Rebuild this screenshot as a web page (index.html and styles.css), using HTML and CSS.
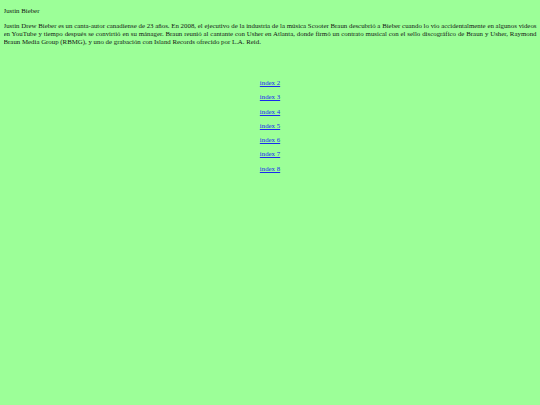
FILE: index.html
```html
<!DOCTYPE html>
<html lang="es">
<head>
<meta charset="utf-8">
<title>Justin Bieber</title>
<link rel="stylesheet" href="styles.css">
</head>
<body>
<p class="title">Justin Bieber</p>
<p class="bio">Justin Drew Bieber es un canta-autor canadiense de 23 años. En 2008, el ejecutivo de la industria de la música Scooter Braun descubrió a Bieber cuando lo vio accidentalmente en algunos videos en YouTube y tiempo después se convirtió en su mánager. Braun reunió al cantante con Usher en Atlanta, donde firmó un contrato musical con el sello discográfico de Braun y Usher, Raymond Braun Media Group (RBMG), y uno de grabación con Island Records ofrecido por L.A. Reid.</p>
<nav class="links">
<a href="#">index 2</a>
<a href="#">index 3</a>
<a href="#">index 4</a>
<a href="#">index 5</a>
<a href="#">index 6</a>
<a href="#">index 7</a>
<a href="#">index 8</a>
</nav>
</body>
</html>
```

FILE: styles.css
```css
html {
  background: #9cff98;
}

body {
  margin: 4px 3.5px;
  font-family: "Liberation Serif", "Times New Roman", serif;
  font-size: 6.85px;
  line-height: 8px;
  color: #142014;
}

p {
  margin: 0 0 7px;
}

.title {
  margin-top: 3px;
}

.bio {
  text-align: justify;
}

.links {
  display: flex;
  flex-direction: column;
  align-items: center;
  gap: 6.3px;
  margin-top: 33px;
}

.links a {
  color: #1a2aee;
  text-decoration: underline;
}
```
